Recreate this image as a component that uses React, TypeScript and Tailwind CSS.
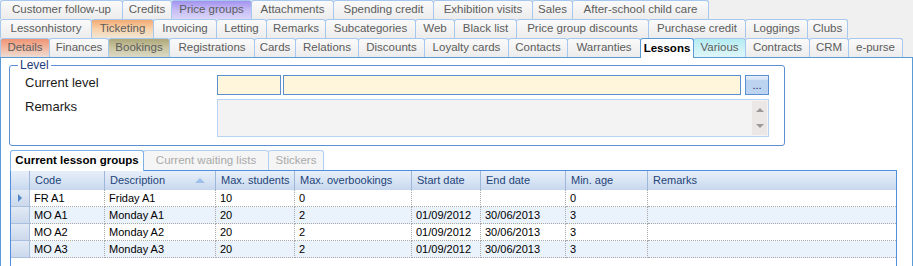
type Tab = { label: string; w: string; tone?: string; active?: boolean };

const TONES: Record<string, string> = {
  plain: "bg-linear-to-b from-[#fafafa] to-[#ececec]",
  purple: "bg-linear-to-b from-[#a292ee] via-[#c6bdf6] to-[#dcd6f8]",
  orange: "bg-linear-to-b from-[#f2aa74] via-[#f9d2a9] to-[#efe6d8]",
  salmon: "bg-linear-to-b from-[#ee9474] via-[#f3b8a0] to-[#ebdcd3]",
  khaki: "bg-linear-to-b from-[#ada77a] via-[#cbc7a2] to-[#dbd9c6]",
  cyan: "bg-linear-to-b from-[#b2ebf2] via-[#cbf2f6] to-[#def6f8]",
};

const row1: Tab[] = [
  { label: "Customer follow-up", w: "w-[123px]" },
  { label: "Credits", w: "w-[50px]" },
  { label: "Price groups", w: "w-[81px]", tone: "purple" },
  { label: "Attachments", w: "w-[83px]" },
  { label: "Spending credit", w: "w-[101px]" },
  { label: "Exhibition visits", w: "w-[100px]" },
  { label: "Sales", w: "w-[41px]" },
  { label: "After-school child care", w: "w-[137px]" },
];

const row2: Tab[] = [
  { label: "Lessonhistory", w: "w-[92px]" },
  { label: "Ticketing", w: "w-[63px]", tone: "orange" },
  { label: "Invoicing", w: "w-[64px]" },
  { label: "Letting", w: "w-[51px]" },
  { label: "Remarks", w: "w-[60px]" },
  { label: "Subcategories", w: "w-[91px]" },
  { label: "Web", w: "w-[40px]" },
  { label: "Black list", w: "w-[63px]" },
  { label: "Price group discounts", w: "w-[133px]" },
  { label: "Purchase credit", w: "w-[98px]" },
  { label: "Loggings", w: "w-[63px]" },
  { label: "Clubs", w: "w-[41px]" },
];

const row3: Tab[] = [
  { label: "Details", w: "w-[50px]", tone: "salmon" },
  { label: "Finances", w: "w-[60px]" },
  { label: "Bookings", w: "w-[62px]", tone: "khaki" },
  { label: "Registrations", w: "w-[86px]" },
  { label: "Cards", w: "w-[42px]" },
  { label: "Relations", w: "w-[64px]" },
  { label: "Discounts", w: "w-[67px]" },
  { label: "Loyalty cards", w: "w-[85px]" },
  { label: "Contacts", w: "w-[60px]" },
  { label: "Warranties", w: "w-[74px]" },
  { label: "Lessons", w: "w-[54px]", active: true },
  { label: "Various", w: "w-[53px]", tone: "cyan" },
  { label: "Contracts", w: "w-[65px]" },
  { label: "CRM", w: "w-[40px]" },
  { label: "e-purse", w: "w-[55px]" },
];

const lessons = [
  { code: "FR A1", desc: "Friday A1", max: "10", over: "0", start: "", end: "", age: "0" },
  { code: "MO A1", desc: "Monday A1", max: "20", over: "2", start: "01/09/2012", end: "30/06/2013", age: "3" },
  { code: "MO A2", desc: "Monday A2", max: "20", over: "2", start: "01/09/2012", end: "30/06/2013", age: "3" },
  { code: "MO A3", desc: "Monday A3", max: "20", over: "2", start: "01/09/2012", end: "30/06/2013", age: "3" },
];

function TabRow({ tabs }: { tabs: Tab[] }) {
  return (
    <div className="flex h-[19px] items-end">
      {tabs.map((t, i) => (
        <div
          key={t.label}
          className={`${t.w} ${i > 0 ? "-ml-px" : ""} flex items-center justify-center whitespace-nowrap rounded-t-[3px] border border-b-0 text-[11.5px] ${
            t.active
              ? "relative z-10 -mb-px h-[20px] border-[#5b9bd5] bg-white font-bold text-black"
              : `h-[19px] border-[#a6c8ef] text-[#5c5c5c] ${TONES[t.tone ?? "plain"]}`
          }`}
        >
          {t.label}
        </div>
      ))}
    </div>
  );
}

function LevelBox() {
  return (
    <fieldset className="ml-[8px] h-[88px] w-[776px] rounded-[3px] border border-[#5b8fd0]">
      <legend className="ml-[8px] px-[2px] text-[12px] leading-[14px] text-[#1f3d7a]">Level</legend>
      <div className="mt-[3px] flex items-start">
        <div className="w-[207px] pl-[15px] text-[13px] leading-[16px] text-[#1a1a1a]">Current level</div>
        <div className="h-[20px] w-[64px] border border-[#5b8fd0] bg-[#fff6dc]" />
        <div className="ml-[2px] h-[20px] w-[458px] border border-[#5b8fd0] bg-[#fff6dc]" />
        <div className="ml-[4px] flex h-[20px] w-[24px] flex-col border border-[#5b8fd0]">
          <div className="h-[6px] bg-linear-to-b from-[#e6eefa] to-[#d2e2f6]" />
          <div className="flex flex-1 items-center justify-center bg-[#bcd4f0] pb-[3px] text-[11px] leading-none text-[#202060]">...</div>
        </div>
      </div>
      <div className="mt-[4px] flex items-start">
        <div className="w-[207px] pl-[15px] text-[13px] leading-[16px] text-[#1a1a1a]">Remarks</div>
        <div className="flex h-[38px] w-[552px] justify-end border border-[#b6d4f3] bg-[#f3f3f3] p-[1px]">
          <div className="flex w-[15px] flex-col items-center justify-between bg-[#ebe7e4] py-[7px]">
            <div className="h-0 w-0 border-x-[4px] border-b-[4px] border-x-transparent border-b-[#9a9a9a]" />
            <div className="h-0 w-0 border-x-[4px] border-t-[4px] border-x-transparent border-t-[#9a9a9a]" />
          </div>
        </div>
      </div>
    </fieldset>
  );
}

function LessonGrid() {
  const head = "flex h-[19px] items-center border-r border-[#9db6da] pl-[5px] text-[11px] text-[#1e4478]";
  const cell = "flex h-[17px] items-center border-r border-b border-dotted border-[#a8a8a8] pl-[4px] text-[11px] text-black";
  return (
    <div className="ml-[9px] h-[120px] w-[887px] border border-[#4f8fde] bg-white">
      <div className="grid grid-cols-[19px_75px_111px_79px_117px_69px_85px_82px_1fr] bg-linear-to-b from-[#e6eef9] via-[#d9e5f4] to-[#c6d7ee]">
        <div className="h-[19px] border-r border-[#9db6da]" />
        <div className={head}>Code</div>
        <div className={`${head} justify-between pr-[10px]`}>
          Description
          <span className="h-0 w-0 border-x-[5px] border-b-[5px] border-x-transparent border-b-[#9cc0ea]" />
        </div>
        <div className={head}>Max. students</div>
        <div className={head}>Max. overbookings</div>
        <div className={head}>Start date</div>
        <div className={head}>End date</div>
        <div className={head}>Min. age</div>
        <div className={`${head} border-r-0`}>Remarks</div>
      </div>
      {lessons.map((r, i) => (
        <div
          key={r.code}
          className={`grid grid-cols-[19px_75px_111px_79px_117px_69px_85px_82px_1fr] ${i % 2 ? "bg-[#eaf2fc]" : "bg-white"}`}
        >
          <div className="flex h-[17px] items-center justify-center border-r border-b border-[#a9bfdd] bg-linear-to-b from-[#e2eaf5] to-[#cbd9ec]">
            {i === 0 && (
              <span className="h-0 w-0 border-y-[4px] border-l-[4px] border-y-transparent border-l-[#4f86c8]" />
            )}
          </div>
          <div className={cell}>{r.code}</div>
          <div className={cell}>{r.desc}</div>
          <div className={cell}>{r.max}</div>
          <div className={cell}>{r.over}</div>
          <div className={cell}>{r.start}</div>
          <div className={cell}>{r.end}</div>
          <div className={cell}>{r.age}</div>
          <div className={`${cell} border-r-0`} />
        </div>
      ))}
    </div>
  );
}

export default function App() {
  return (
    <div className="h-[266px] w-[913px] overflow-hidden bg-[#f0f0f0] font-['Liberation_Sans',Arial,sans-serif]">
      <TabRow tabs={row1} />
      <TabRow tabs={row2} />
      <TabRow tabs={row3} />
      <div className="h-[220px] w-[913px] border border-[#5b9bd5] bg-white">
        <LevelBox />
        <div className="ml-[9px] mt-[4px] flex h-[20px] items-end">
          <div className="relative z-10 -mb-px flex h-[21px] w-[134px] items-center justify-center rounded-t-[3px] border border-b-0 border-[#7eb0ea] bg-white text-[11.5px] font-bold text-black">
            Current lesson groups
          </div>
          <div className="-ml-px flex h-[20px] w-[126px] items-center justify-center rounded-t-[3px] border border-b-0 border-[#b4d0f0] bg-[#f5f5f5] text-[11.5px] text-[#a9a9a9]">
            Current waiting lists
          </div>
          <div className="-ml-px flex h-[20px] w-[56px] items-center justify-center rounded-t-[3px] border border-b-0 border-[#b4d0f0] bg-[#f5f5f5] text-[11.5px] text-[#a9a9a9]">
            Stickers
          </div>
        </div>
        <LessonGrid />
      </div>
    </div>
  );
}
